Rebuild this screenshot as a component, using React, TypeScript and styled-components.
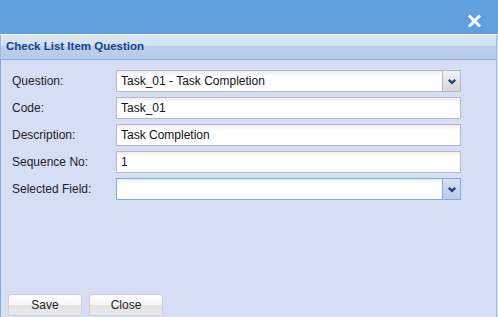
import React from 'react';
import styled, { createGlobalStyle, css } from 'styled-components';

const GlobalStyle = createGlobalStyle`
  html, body {
    margin: 0;
    padding: 0;
    background: #d6def6;
  }
  body {
    font-family: 'Liberation Sans', Arial, sans-serif;
  }
`;

type Field = {
  label: string;
  value: string;
  kind: 'combo' | 'text';
  focused?: boolean;
};

const fields: Field[] = [
  { label: 'Question:', value: 'Task_01 - Task Completion', kind: 'combo' },
  { label: 'Code:', value: 'Task_01', kind: 'text' },
  { label: 'Description:', value: 'Task Completion', kind: 'text' },
  { label: 'Sequence No:', value: '1', kind: 'text' },
  { label: 'Selected Field:', value: '', kind: 'combo', focused: true },
];

const Chevron = () => (
  <svg width="10" height="7" viewBox="0 0 10 7">
    <polyline points="1.8,1.8 5,4.8 8.2,1.8" fill="none" stroke="#233f7c" strokeWidth="2.4" />
  </svg>
);

const CloseIcon = () => (
  <svg width="13" height="12" viewBox="0 0 13 12">
    <path d="M2 1.5 L11 10.5 M11 1.5 L2 10.5" stroke="#ffffff" strokeWidth="3" strokeLinecap="square" />
  </svg>
);

const App = () => {
  return (
    <Window>
      <GlobalStyle />
      <TitleBar>
        <CloseTool>
          <CloseIcon />
        </CloseTool>
      </TitleBar>
      <PanelHeader>Check List Item Question</PanelHeader>
      <Body>
        <Form>
          {fields.map(f => (
            <React.Fragment key={f.label}>
              <Label>{f.label}</Label>
              <InputWrap focused={!!f.focused}>
                <InputText>{f.value}</InputText>
                {f.kind === 'combo' && (
                  <Trigger focused={!!f.focused}>
                    <Chevron />
                  </Trigger>
                )}
              </InputWrap>
            </React.Fragment>
          ))}
        </Form>
        <ButtonBar>
          <Button>Save</Button>
          <Button>Close</Button>
        </ButtonBar>
      </Body>
    </Window>
  );
};

export default App;

const Window = styled.div`
  display: flex;
  flex-direction: column;
  width: 498px;
  height: 317px;
  overflow: hidden;
`;

const TitleBar = styled.div`
  height: 34px;
  background: #60a1dd;
  border-bottom: 1px solid #ffffff;
  display: flex;
  justify-content: flex-end;
  align-items: flex-end;
  padding-right: 17px;
`;

const CloseTool = styled.div`
  width: 13px;
  height: 12px;
  margin-bottom: 7px;
  display: flex;
`;

const PanelHeader = styled.div`
  height: 24px;
  line-height: 23px;
  padding-left: 5px;
  margin-right: 1px;
  border-left: 1px solid #99bbe8;
  border-right: 1px solid #99bbe8;
  border-bottom: 1px solid #8db2e3;
  background: linear-gradient(to bottom, #d9e6f5 0, #d2e0f3 11px, #bccfec 11px, #b6caeb 100%);
  color: #15428b;
  font-family: 'Liberation Sans', Arial, sans-serif;
  font-weight: bold;
  font-size: 11.5px;
`;

const Body = styled.div`
  flex: 1;
  display: flex;
  flex-direction: column;
  background: #d6def6;
  border-left: 1px solid #7fa9de;
  border-right: 1px solid #99bbe8;
  margin-right: 1px;
`;

const Form = styled.div`
  display: grid;
  grid-template-columns: 104px 345px;
  grid-auto-rows: 22px;
  row-gap: 5px;
  padding: 10px 0 0 11px;
  align-items: center;
`;

const Label = styled.div`
  font-size: 12px;
  color: #222;
  padding-bottom: 1px;
`;

const InputWrap = styled.div<{ focused: boolean }>`
  display: flex;
  height: 22px;
  box-sizing: border-box;
  border: 1px solid #b5b8c8;
  background: #fff linear-gradient(to bottom, #ececec 0, #f8f8f8 3px, #ffffff 5px);
  ${props =>
    props.focused &&
    css`
      border-color: #7eadd9;
    `}
`;

const InputText = styled.div`
  flex: 1;
  padding-left: 4px;
  font-size: 12px;
  line-height: 20px;
  color: #111;
  white-space: nowrap;
  overflow: hidden;
`;

const Trigger = styled.div<{ focused: boolean }>`
  width: 17px;
  display: flex;
  align-items: center;
  justify-content: center;
  border-left: 1px solid #b5b8c8;
  background: linear-gradient(to bottom, #f2f2f2, #d6d6d6);
  ${props =>
    props.focused &&
    css`
      border-left-color: #7eadd9;
      background: linear-gradient(to bottom, #d4e0f0, #b9cde8);
    `}
`;

const ButtonBar = styled.div`
  margin-top: auto;
  display: flex;
  gap: 7px;
  padding: 0 0 1px 7px;
`;

const Button = styled.div`
  width: 74px;
  height: 22px;
  box-sizing: border-box;
  border: 1px solid #d2d2d2;
  border-radius: 3px;
  background: linear-gradient(to bottom, #ffffff 0, #f4f4f4 50%, #e4e4e4 50%, #e8e8e8 100%);
  font-size: 12px;
  color: #222;
  display: flex;
  align-items: center;
  justify-content: center;
`;
